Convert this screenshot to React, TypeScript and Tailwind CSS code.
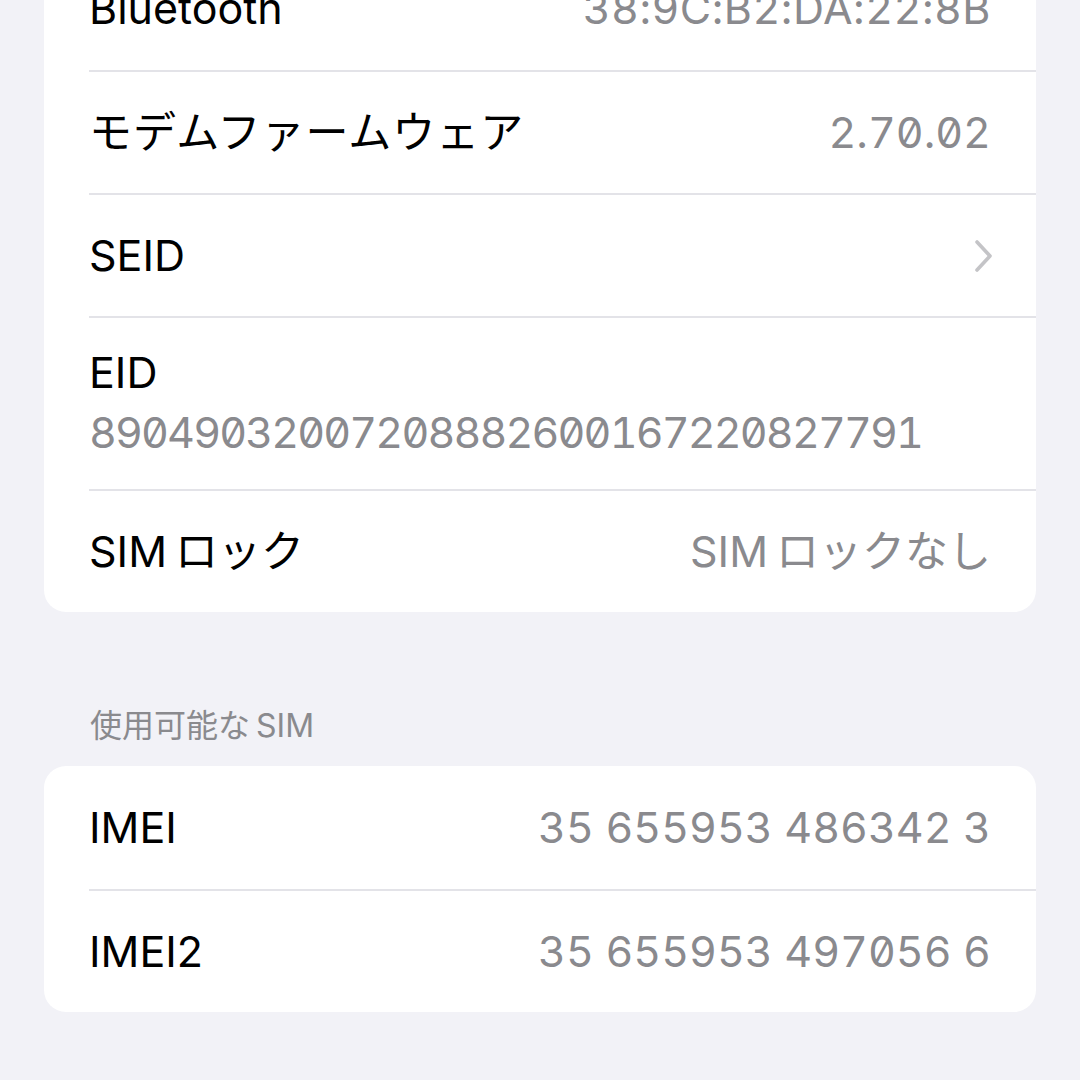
const Chevron = () => (
  <svg width="20" height="36" viewBox="0 0 20 36" fill="none">
    <polyline
      points="4,4 17,18 4,32"
      stroke="#c4c4c7"
      strokeWidth="3.6"
      strokeLinecap="round"
      strokeLinejoin="round"
    />
  </svg>
);

// "SIM" followed by kana, with the small gap iOS leaves between them
const Sim = ({ rest }: { rest: string }) => (
  <>
    SIM<span className="ml-[8px]">{rest}</span>
  </>
);

const Row = ({
  label,
  value,
  first,
  chevron,
}: {
  label: React.ReactNode;
  value?: React.ReactNode;
  first?: boolean;
  chevron?: boolean;
}) => (
  <div className="pl-[45px]">
    <div
      className={
        "h-[123px] pr-[45px] flex items-center justify-between " +
        (first ? "" : "border-t-2 border-[#e3e3e8]")
      }
    >
      <span className="text-[43px] text-black">{label}</span>
      {chevron ? (
        <span className="mr-[-2px]">
          <Chevron />
        </span>
      ) : (
        <span className="text-[43px] text-[#8a8a8e] slashed-zero tabular-nums">{value}</span>
      )}
    </div>
  </div>
);

export default function App() {
  return (
    <div
      className="w-[1080px] h-[1080px] overflow-hidden bg-[#f2f2f7] px-[44px]"
      style={{ fontFamily: 'Inter, "Noto Sans CJK JP", sans-serif' }}
    >
      {/* main info card, scrolled so the top row is cut off */}
      <div className="-mt-[53px] bg-white rounded-[22px] overflow-hidden">
        <Row first label="Bluetooth" value={<span className="tracking-[0.5px]">38:9C:B2:DA:22:8B</span>} />
        <Row label={<span className="tracking-[1px]">モデムファームウェア</span>} value="2.70.02" />
        <Row label="SEID" chevron />
        <div className="pl-[45px]">
          <div className="h-[173px] pr-[45px] border-t-2 border-[#e3e3e8] flex flex-col justify-center">
            <span className="text-[43px] leading-[54px] text-black -mt-[4px]">EID</span>
            <span className="text-[43px] leading-[54px] mt-[6px] text-[#8a8a8e] slashed-zero tabular-nums tracking-[-1.85px]">
              89049032007208882600167220827791
            </span>
          </div>
        </div>
        <Row label={<Sim rest="ロック" />} value={<Sim rest="ロックなし" />} />
      </div>

      <div className="pt-[94px] pb-[20px] pl-[46px] text-[32px] leading-[40px] text-[#8a8a8e]">
        使用可能な<span className="ml-[6px]">SIM</span>
      </div>

      <div className="bg-white rounded-[22px] overflow-hidden">
        <Row first label="IMEI" value="35 655953 486342 3" />
        <Row label="IMEI2" value="35 655953 497056 6" />
      </div>
    </div>
  );
}
